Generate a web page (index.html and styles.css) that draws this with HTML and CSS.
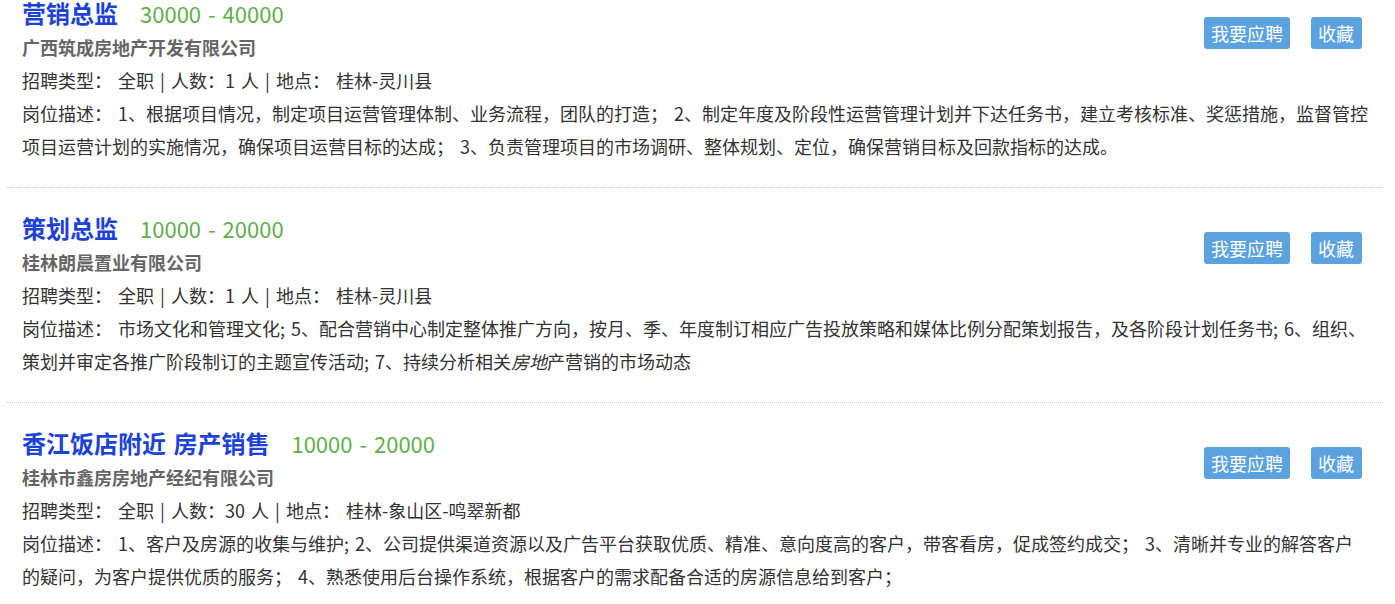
FILE: index.html
```html
<!DOCTYPE html>
<html>
<head>
  <meta charset="utf-8">
  <title>职位列表</title>
  <link rel="stylesheet" href="styles.css">
</head>
<body>
  <div class="job-list">
    <!-- 职位 1 -->
    <div class="job-item">
      <div class="job-head">
        <a class="job-title" href="#">营销总监</a>
        <span class="job-salary">30000 - 40000</span>
      </div>
      <div class="job-company">广西筑成房地产开发有限公司</div>
      <div class="job-meta">招聘类型： 全职 | 人数：1 人 | 地点： 桂林-灵川县</div>
      <div class="job-actions">
        <a class="btn btn-apply" href="#">我要应聘</a>
        <a class="btn btn-fav" href="#">收藏</a>
      </div>
      <div class="job-desc">岗位描述： 1、根据项目情况，制定项目运营管理体制、业务流程，团队的打造； 2、制定年度及阶段性运营管理计划并下达任务书，建立考核标准、奖惩措施，监督管控项目运营计划的实施情况，确保项目运营目标的达成； 3、负责管理项目的市场调研、整体规划、定位，确保营销目标及回款指标的达成。</div>
    </div>

    <!-- 职位 2 -->
    <div class="job-item">
      <div class="job-head">
        <a class="job-title" href="#">策划总监</a>
        <span class="job-salary">10000 - 20000</span>
      </div>
      <div class="job-company">桂林朗晨置业有限公司</div>
      <div class="job-meta">招聘类型： 全职 | 人数：1 人 | 地点： 桂林-灵川县</div>
      <div class="job-actions">
        <a class="btn btn-apply" href="#">我要应聘</a>
        <a class="btn btn-fav" href="#">收藏</a>
      </div>
      <div class="job-desc">岗位描述： 市场文化和管理文化; 5、配合营销中心制定整体推广方向，按月、季、年度制订相应广告投放策略和媒体比例分配策划报告，及各阶段计划任务书; 6、组织、策划并审定各推广阶段制订的主题宣传活动; 7、持续分析相关<em>房地</em>产营销的市场动态</div>
    </div>

    <!-- 职位 3 -->
    <div class="job-item">
      <div class="job-head">
        <a class="job-title" href="#">香江饭店附近 房产销售</a>
        <span class="job-salary">10000 - 20000</span>
      </div>
      <div class="job-company">桂林市鑫房房地产经纪有限公司</div>
      <div class="job-meta">招聘类型： 全职 | 人数：30 人 | 地点： 桂林-象山区-鸣翠新都</div>
      <div class="job-actions">
        <a class="btn btn-apply" href="#">我要应聘</a>
        <a class="btn btn-fav" href="#">收藏</a>
      </div>
      <div class="job-desc">岗位描述： 1、客户及房源的收集与维护; 2、公司提供渠道资源以及广告平台获取优质、精准、意向度高的客户，带客看房，促成签约成交； 3、清晰并专业的解答客户的疑问，为客户提供优质的服务； 4、熟悉使用后台操作系统，根据客户的需求配备合适的房源信息给到客户；</div>
    </div>
  </div>
</body>
</html>
```

FILE: styles.css
```css
/* 页面基础 */
body {
  margin: 0;
  padding: 0;
  background-color: #fff;
  font-family: "Noto Sans CJK SC", "Noto Sans", sans-serif;
  color: #333;
}

/* 列表（页面已向下滚动一点） */
.job-list {
  margin: -27px 12px 0 7px;
}

.job-item {
  display: grid;
  grid-template-columns: 1fr auto;
  grid-template-areas:
    "head    actions"
    "company actions"
    "meta    actions"
    "desc    desc";
  padding: 23px 12px 24px 15px;
  border-bottom: 1px dotted #c8c8c8;
  font-size: 18px;
  line-height: 33px;
  word-spacing: 2px;
}

/* 标题和薪资 */
.job-head {
  grid-area: head;
  display: flex;
  align-items: baseline;
  gap: 22px;
}

.job-title {
  color: #1c42d8;
  font-size: 24px;
  font-weight: bold;
  text-decoration: none;
}

.job-salary {
  color: #5fae4a;
  font-size: 22px;
}

.job-company {
  grid-area: company;
  color: #666;
  font-weight: bold;
  padding-top: 1px;
}

.job-meta {
  grid-area: meta;
}

.job-desc {
  grid-area: desc;
}

.job-desc em {
  font-style: italic;
}

/* 按钮 */
.job-actions {
  grid-area: actions;
  display: flex;
  gap: 21px;
  align-self: start;
  margin-top: 21px;
  margin-right: 9px;
}

.btn {
  display: block;
  height: 32px;
  line-height: 32px;
  padding: 0 7px;
  background-color: #5ba2de;
  color: #fff;
  border-radius: 3px;
  text-decoration: none;
  font-size: 18px;
}

.btn-fav {
  padding: 0 8px 0 7px;
}
```
